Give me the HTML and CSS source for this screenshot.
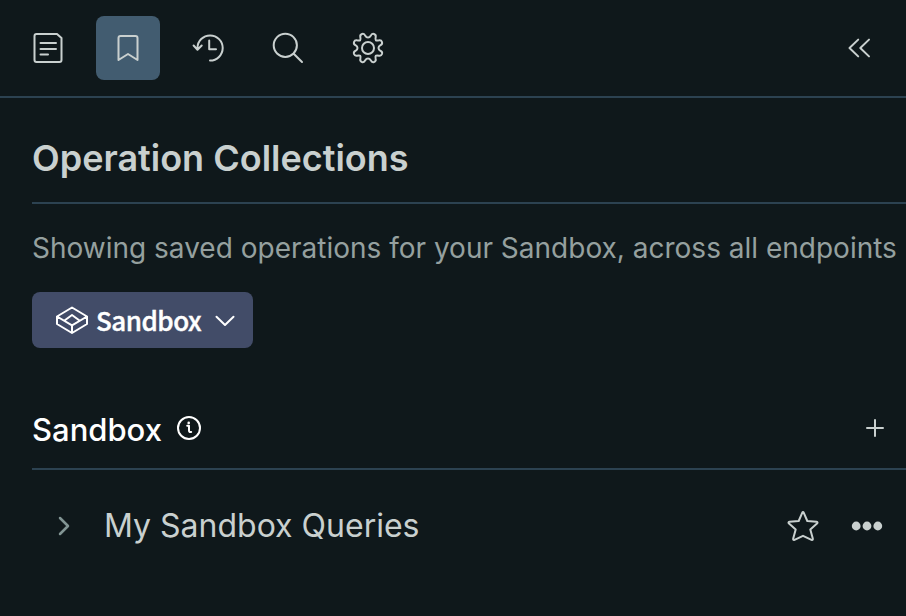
FILE: index.html
```html
<!DOCTYPE html>
<html lang="en">
<head>
<meta charset="utf-8">
<title>Operation Collections</title>
<link rel="stylesheet" href="styles.css">
</head>
<body>
<header class="toolbar">
  <nav class="tabs">
    <button class="tab" aria-label="Documentation"><svg class="icon" width="32" height="32" viewBox="0 0 32 32"><path d="M4.500 2H25L29.500 6V28Q29.500 30 27.500 30H4.500Q2.500 30 2.500 28V4Q2.500 2 4.500 2ZM8.500 11H24M8.500 17H24M8.500 22.500H16"/></svg></button>
    <button class="tab active" aria-label="Collections"><svg class="icon" width="32" height="32" viewBox="0 0 32 32"><path d="M6.500 28V6Q6.500 4 8.500 4H23.500Q25.500 4 25.500 6V28L16 22Z"/></svg></button>
    <button class="tab" aria-label="History"><svg class="icon" width="32" height="32" viewBox="0 0 32 32"><path d="M5.500 17.500V16A12.600 12.600 0 1 1 18 28.600M1.600 13.500L5.500 17.700L9.700 13.500M17.200 8.500V17.300H24"/></svg></button>
    <button class="tab" aria-label="Search"><svg class="icon" width="32" height="32" viewBox="0 0 32 32"><circle cx="13.300" cy="13.300" r="11.600"/><path d="M21.700 21.700L30 30"/></svg></button>
    <button class="tab" aria-label="Settings"><svg class="icon" width="32" height="32" viewBox="0 0 32 32"><circle cx="16" cy="16" r="6"/><path d="M13.300 3.800Q14.300 5.500 16 5.500T18.700 3.800Q19.800 1.300 22 2Q24.200 2.800 23.700 5Q23.200 7.600 23.800 8.200Q24.400 8.800 27 8.300Q29.200 7.800 30 10Q30.700 12.200 28.200 13.300Q26.500 14.300 26.500 16T28.200 18.700Q30.700 19.800 30 22Q29.200 24.200 27 23.700Q24.400 23.200 23.800 23.800Q23.200 24.400 23.700 27Q24.200 29.200 22 30Q19.800 30.700 18.700 28.200Q17.700 26.500 16 26.500T13.300 28.200Q12.200 30.700 10 30Q7.800 29.200 8.300 27Q8.800 24.400 8.200 23.800Q7.600 23.200 5 23.700Q2.800 24.200 2 22Q1.300 19.800 3.800 18.700Q5.500 17.700 5.500 16T3.800 13.300Q1.300 12.200 2 10Q2.800 7.800 5 8.300Q7.600 8.800 8.200 8.200Q8.800 7.600 8.300 5Q7.800 2.800 10 2Q12.200 1.300 13.300 3.800Z"/></svg></button>
  </nav>
  <button class="collapse" aria-label="Collapse"><svg class="icon" width="32" height="32" viewBox="0 0 32 32"><path d="M15.200 7.600L6.500 16L15.200 24.400M26 7.600L17.300 16L26 24.400"/></svg></button>
</header>
<main class="panel">
  <h1 class="title">Operation Collections</h1>
  <p class="description">Showing saved operations for your Sandbox, across all endpoints</p>
  <button class="picker">
    <svg class="icon" width="32" height="28" viewBox="0 0 32 28"><path d="M16 1.500L31 10.500V18L16 27L1 18V10.500ZM1 10.500L16 19.300L31 10.500M16 19.300V27M8.500 14.500L16 9L23.500 14.500"/></svg>
    <span class="picker-label">Sandbox</span>
    <svg class="icon picker-arrow" width="20" height="12" viewBox="0 0 20 12"><path d="M1.500 1.700L10 10L18.500 1.700"/></svg>
  </button>
  <section class="collection">
    <div class="collection-head">
      <h2 class="collection-title">Sandbox</h2>
      <svg class="icon info" width="24" height="24" viewBox="0 0 24 24"><circle cx="12" cy="12" r="11"/><path d="M10.200 9.800H12V14.500Q12 16.400 14.200 16"/><circle class="dot" cx="11.700" cy="6.900" r="1.300"/></svg>
      <svg class="icon add" width="20" height="20" viewBox="0 0 20 20"><path d="M10 2V18M2 10H18"/></svg>
    </div>
    <div class="row">
      <svg class="icon chevron" width="12" height="20" viewBox="0 0 12 20"><path d="M2 2L10 10L2 18"/></svg>
      <span class="row-name">My Sandbox Queries</span>
      <svg class="icon star" width="32" height="32" viewBox="0 0 32 32"><path d="M15.200 2.800Q16 1.200 16.800 2.800L20.300 11L29.500 11.800Q31.300 12.200 30 13.500L23.300 19.400L25.800 28.600Q26.100 30.500 24.500 29.800L16 25.800L7.500 29.800Q5.900 30.500 6.200 28.600L8.700 19.400L2 13.500Q.7 12.200 2.500 11.800L11.700 11Z"/></svg>
      <svg class="more" width="32" height="10" viewBox="0 0 32 10"><circle cx="5.200" cy="5" r="4.400"/><circle cx="16" cy="5" r="4.400"/><circle cx="26.800" cy="5" r="4.400"/></svg>
    </div>
  </section>
</main>
</body>
</html>
```
FILE: styles.css
```css
* { box-sizing: border-box; }
body { margin: 0; height: 616px; overflow: hidden; background: #0f181b; color: #c9d0cf; font-family: Inter, sans-serif; }
button { border: 0; padding: 0; background: none; color: inherit; font: inherit; display: flex; align-items: center; justify-content: center; }
.icon { display: block; flex: none; fill: none; stroke: currentColor; stroke-width: 2; stroke-linecap: round; stroke-linejoin: round; }
.toolbar { display: flex; align-items: center; justify-content: space-between; height: 98px; padding: 0 31px 0 16px; border-bottom: 2px solid #2c4251; }
.tabs { display: flex; gap: 16px; }
.tab { width: 64px; height: 64px; border-radius: 8px; }
.tab.active { background: #425c70; }
.panel { padding-left: 32px; }
.title { margin: 0; height: 106px; padding-top: 38px; border-bottom: 2px solid #2c4251; font-size: 36px; line-height: 44px; font-weight: 600; white-space: nowrap; }
.description { margin: 24px 0 0; font-size: 28px; line-height: 40px; color: #95a09f; white-space: nowrap; }
.picker { width: 221px; height: 56px; margin-top: 24px; padding: 0 18px 0 24px; border-radius: 8px; background: #424c68; color: #fff; justify-content: flex-start; }
.picker-label { margin-left: 8px; font-family: "Noto Sans CJK SC", sans-serif; font-size: 26px; line-height: 40px; font-weight: 500; letter-spacing: -0.5px; -webkit-text-stroke: 0.4px currentColor; }
.picker-arrow { margin: 2px 0 0 auto; }
.collection { margin-top: 44px; }
.collection-head { display: flex; align-items: center; height: 78px; padding: 0 21px 0 0; border-bottom: 2px solid #2c4251; color: #fff; }
.collection-title { margin: 0; font-size: 31px; line-height: 40px; font-weight: 500; }
.info { margin: 0 0 4px 15px; }
.info .dot { stroke: none; fill: currentColor; }
.add { margin: 0 0 4px auto; color: #c9d0cf; }
.row { display: flex; align-items: center; height: 112px; padding: 0 23px 0 26px; }
.chevron { color: #829594; stroke-width: 2.5; }
.row-name { margin-left: 34px; font-size: 32px; line-height: 40px; white-space: nowrap; }
.star { margin-left: auto; }
.more { margin-left: 32px; fill: currentColor; }
```
